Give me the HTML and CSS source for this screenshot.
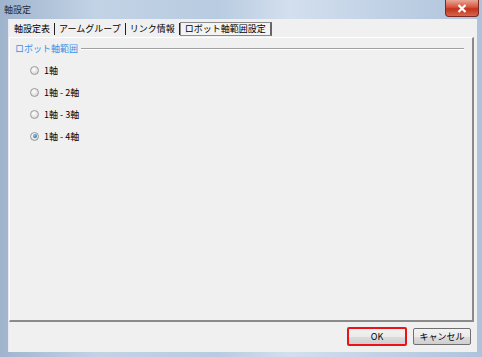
FILE: index.html
```html
<!DOCTYPE html>
<html lang="ja">
<head>
    <meta charset="UTF-8">
    <title>軸設定</title>
    <link rel="stylesheet" href="styles.css">
</head>
<body>
    <div class="window">
        <div class="titlebar">
            <span class="title">軸設定</span>
            <div class="close">
                <svg width="10" height="9" viewBox="0 0 10 9">
                    <path d="M1.5 1 L8.5 8 M8.5 1 L1.5 8" stroke="#fff" stroke-width="2.2" />
                </svg>
            </div>
        </div>

        <div class="client">
            <div class="tabs">
                <span class="tab">軸設定表</span>
                <span class="tab">アームグループ</span>
                <span class="tab">リンク情報</span>
                <span class="tab active">ロボット軸範囲設定</span>
            </div>

            <div class="panel">
                <div class="group-title">
                    <span>ロボット軸範囲</span>
                    <div class="group-line"></div>
                </div>
                <div class="options">
                    <label class="option"><span class="radio"></span>1軸</label>
                    <label class="option"><span class="radio"></span>1軸 - 2軸</label>
                    <label class="option"><span class="radio"></span>1軸 - 3軸</label>
                    <label class="option"><span class="radio checked"></span>1軸 - 4軸</label>
                </div>
            </div>

            <div class="buttons">
                <button class="btn ok">OK</button>
                <button class="btn">キャンセル</button>
            </div>
        </div>
    </div>
</body>
</html>
```

FILE: styles.css
```css
body {
    margin: 0;
    padding: 0;
    font-family: "Noto Sans CJK JP", "Liberation Sans", sans-serif;
    font-size: 9px;
    color: #000;
}

.window {
    width: 482px;
    height: 357px;
    display: flex;
    flex-direction: column;
    background: linear-gradient(90deg, #9fb4cd 0%, #c3d3e6 20%, #b8cbe0 45%, #d3dfee 60%, #aec3db 100%);
}

.titlebar {
    height: 19px;
    display: flex;
    align-items: flex-start;
    justify-content: space-between;
    padding-left: 4px;
}

.title {
    margin-top: 3px;
    color: #1e2a3a;
}

.close {
    width: 34px;
    height: 17px;
    margin-right: 3px;
    display: flex;
    align-items: center;
    justify-content: center;
    border: 1px solid #7a2a24;
    border-top: none;
    border-radius: 0 0 4px 4px;
    box-sizing: border-box;
    background: linear-gradient(180deg, #e9a796 0%, #d7533f 45%, #c2321c 55%, #d8654a 100%);
}

.client {
    flex: 1;
    margin: 0 5px 5px 8px;
    background: #f0f0f0;
    display: flex;
    flex-direction: column;
    border-left: 1px solid #e6e9ee;
}

.tabs {
    display: flex;
    align-items: center;
    height: 17px;
    padding: 1px 0 0 1px;
}

.tab {
    padding: 0 4px;
    line-height: 12px;
    border-right: 1px solid #222;
}

.tab.active {
    border: 1px solid #8c8c8c;
    border-right: 2px solid #666;
    background: #f4f4f4;
    line-height: 12px;
}

.panel {
    height: 285px;
    margin: 0 3px 0 0;
    border-top: 1px solid #ffffff;
    border-left: 1px solid #ffffff;
    border-right: 2px solid #8a8a8a;
    border-bottom: 2px solid #8a8a8a;
    box-sizing: border-box;
    padding: 4px 8px 0 5px;
}

.group-title {
    display: flex;
    align-items: center;
    gap: 3px;
    color: #3c8fe6;
}

.group-line {
    flex: 1;
    height: 0;
    border-top: 1px solid #a0a0a0;
    border-bottom: 1px solid #ffffff;
    margin-top: 1px;
}

.options {
    display: flex;
    flex-direction: column;
    gap: 10px;
    padding: 9px 0 0 15px;
}

.option {
    display: flex;
    align-items: center;
    gap: 5px;
    height: 12px;
}

.radio {
    width: 7px;
    height: 7px;
    border-radius: 50%;
    border: 1px solid #9a9a9a;
    background: radial-gradient(circle at 40% 35%, #ffffff 0%, #dcdcdc 70%, #c8c8c8 100%);
    display: flex;
    align-items: center;
    justify-content: center;
}

.radio.checked::after {
    content: '';
    width: 4px;
    height: 4px;
    border-radius: 50%;
    background: radial-gradient(circle at 40% 35%, #7ec0f0 0%, #1c5fa8 100%);
}

.buttons {
    flex: 1;
    display: flex;
    justify-content: flex-end;
    align-items: center;
    gap: 6px;
    padding: 0 6px 2px 0;
}

.btn {
    font-family: inherit;
    font-size: 9px;
    height: 17px;
    padding: 0;
    border: 1px solid #707070;
    border-radius: 2px;
    background: linear-gradient(180deg, #f2f2f2 0%, #ebebeb 50%, #dddddd 51%, #cfcfcf 100%);
    color: #000;
}

.btn.ok {
    width: 60px;
    height: 19px;
    border: 2px solid #e8141a;
}

.btn:not(.ok) {
    width: 58px;
}
```
